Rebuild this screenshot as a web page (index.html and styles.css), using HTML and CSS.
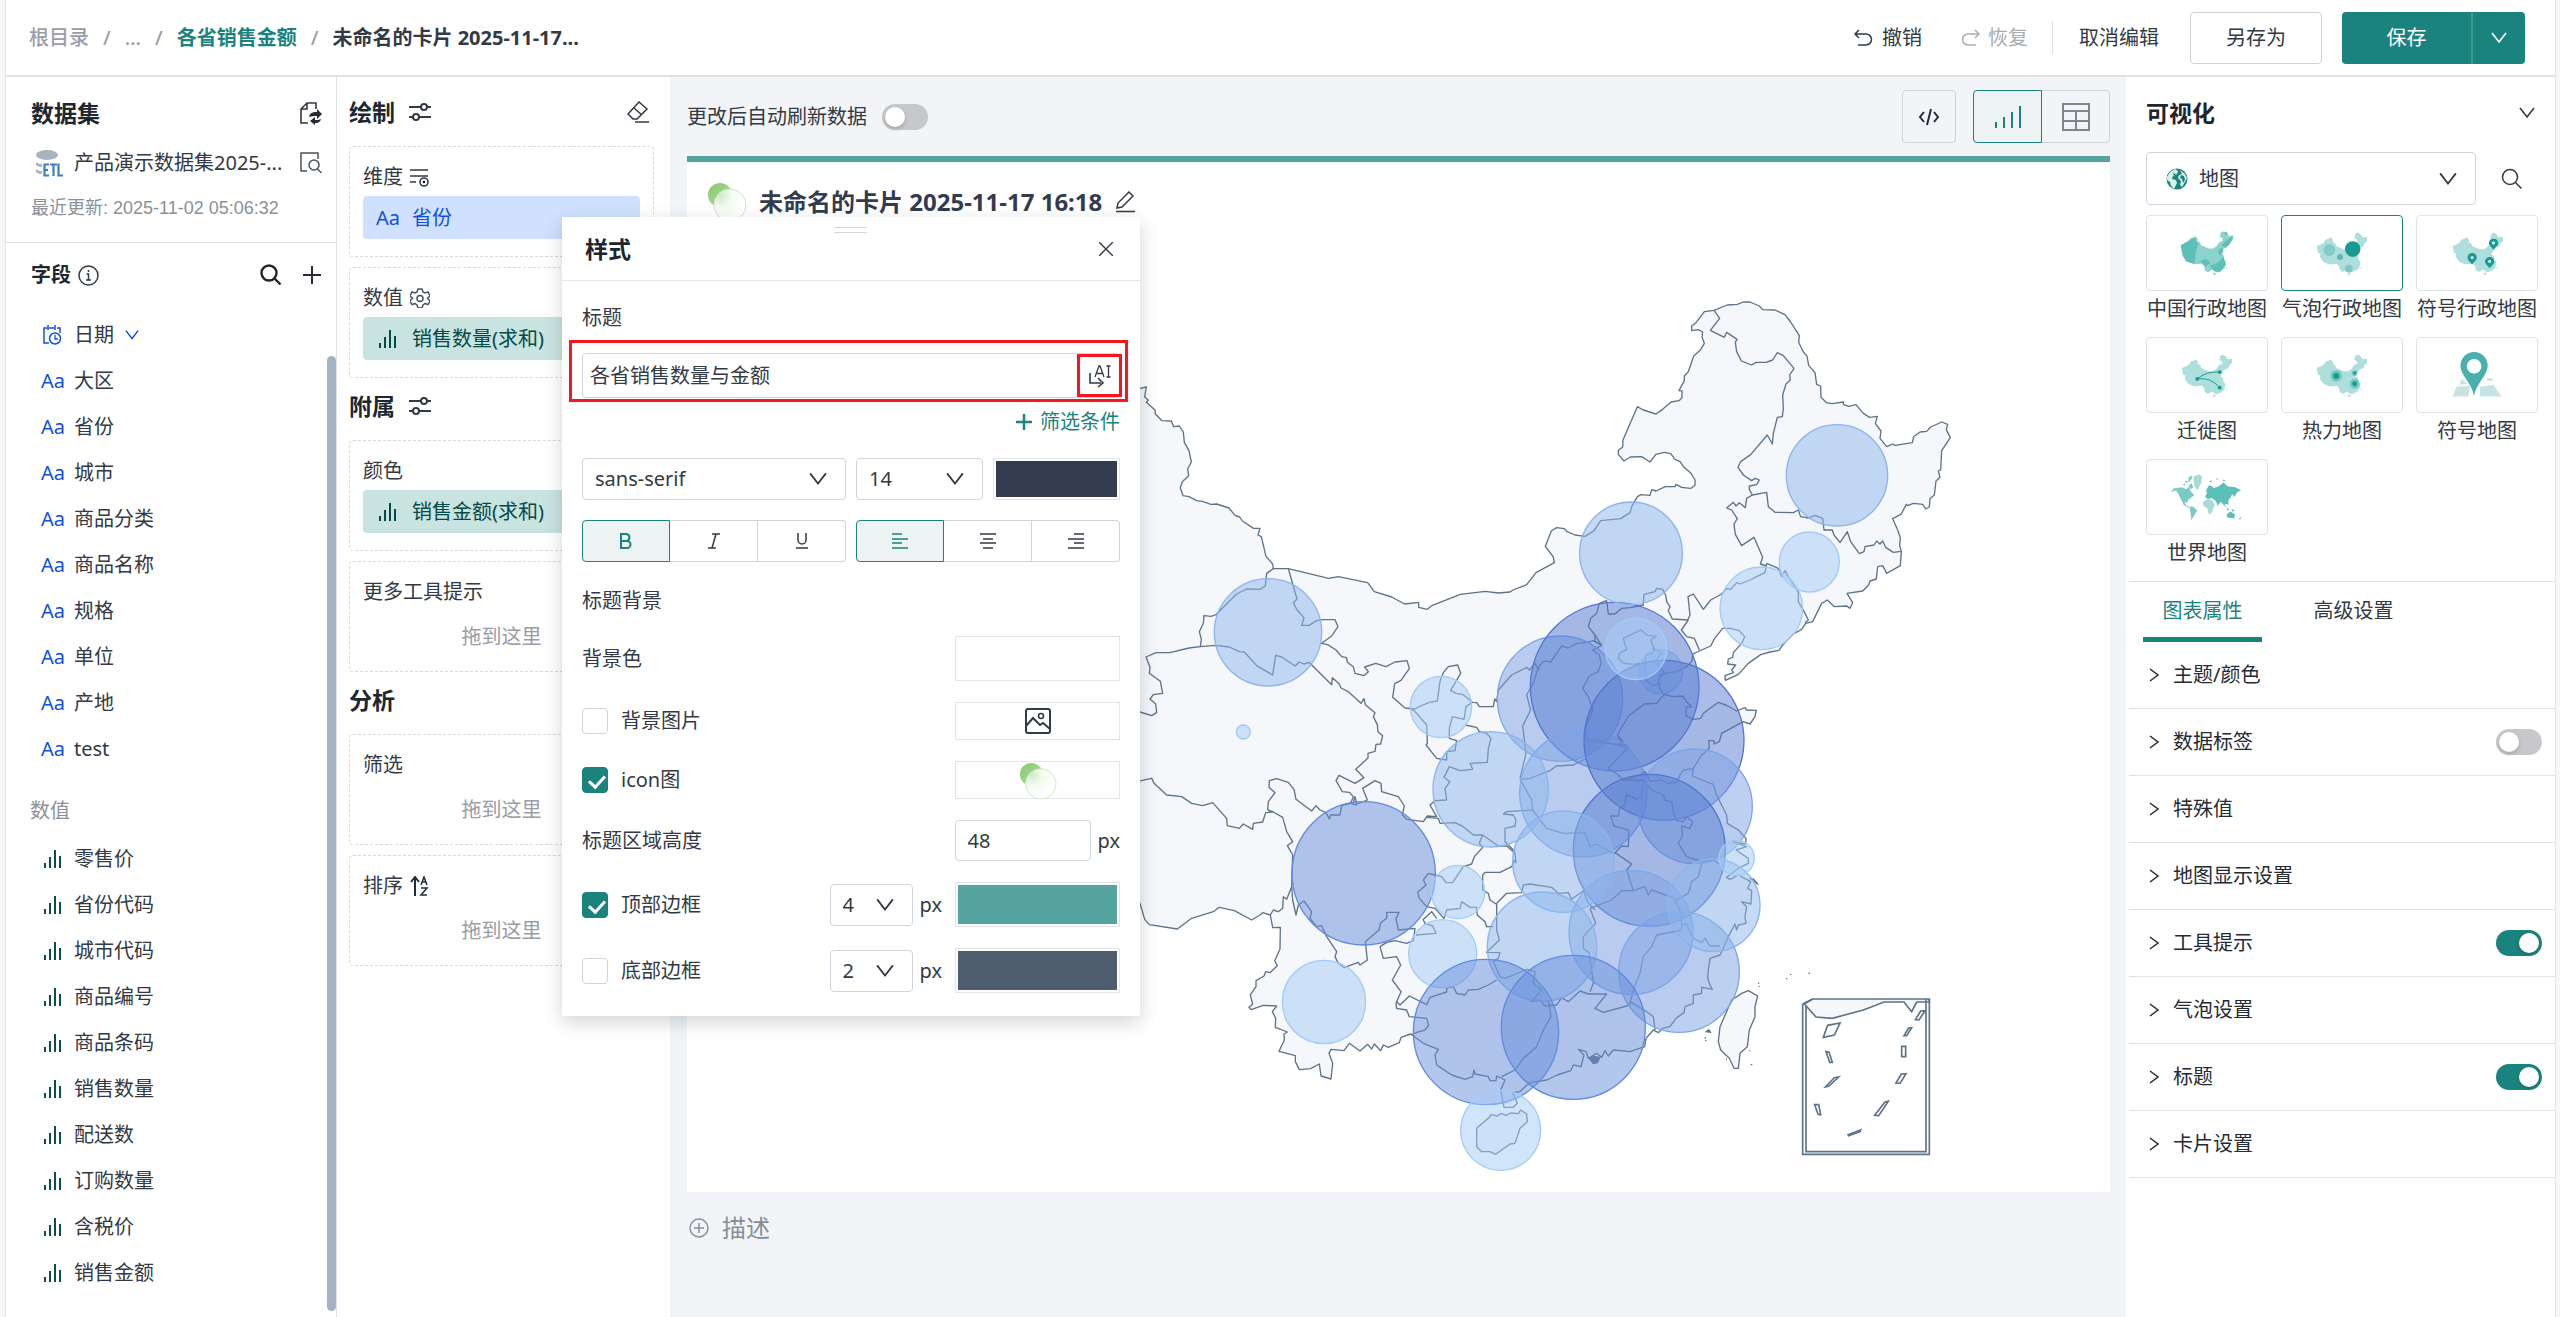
FILE: index.html
```html
<!DOCTYPE html>
<html lang="zh-CN">
<head>
<meta charset="utf-8">
<meta name="viewport" content="width=device-width, initial-scale=1">
<title>未命名的卡片</title>
<link rel="stylesheet" href="styles.css">
</head>
<body>
<svg class="sprite" aria-hidden="true">
  <symbol id="down" viewBox="0 0 16 16"><path d="M1 3l7 9 7-9" fill="none" stroke="currentColor" stroke-width="1.6"/></symbol>
  <symbol id="right" viewBox="0 0 16 16"><path d="M4 2l8 6-8 6" fill="none" stroke="currentColor" stroke-width="1.5"/></symbol>
  <symbol id="bars" viewBox="0 0 20 20"><path d="M3 19v-5M8 19V8M13 19V1M18 19V7" fill="none" stroke="currentColor" stroke-width="2"/></symbol>
  <symbol id="sliders" viewBox="0 0 22 20"><path d="M0 5h12M18 5h4M0 15h4M10 15h12" fill="none" stroke="currentColor" stroke-width="2"/><circle cx="15" cy="5" r="3" fill="none" stroke="currentColor" stroke-width="2"/><circle cx="7" cy="15" r="3" fill="none" stroke="currentColor" stroke-width="2"/></symbol>
  <symbol id="search" viewBox="0 0 22 22"><circle cx="9" cy="9" r="7.5" fill="none" stroke="currentColor"/><path d="M14.5 14.5l6 6" stroke="currentColor"/></symbol>
  <symbol id="orb" viewBox="0 0 40 40"><circle cx="13" cy="13" r="12" fill="url(#leaf)"/><circle cx="23" cy="23" r="16" fill="url(#glass)" stroke="#cfe8c5" stroke-width="1"/></symbol>
  <symbol id="china" viewBox="0 0 162 135"><path d="M0 42l14-6 10-6 4-8 12-4 5-4 7 8 0 8 8 4 2 8 10 4 13 6 15 0 12-8 6-10 12-6-2-8-8-4 4-14 8-4 8 6 8 10 14-2v12l-8 8-4 10-14 6-8 12-4 10 8 2 2 14 6 8-4 18-10 8-14 6-8-3-6-6-14 8-10-6-2-12-8-8-22 2-20-8-12-16 2-10-8-4z"/><circle cx="104" cy="131" r="4"/><path d="M140 110l4-2-2 9z"/></symbol>
  <symbol id="pin" viewBox="0 0 20 24"><path d="M10 0a9.500 9.500 0 0 1 9.500 9.500C19.500 15 13 18 10 24 7 18 .5 15 .5 9.500A9.500 9.500 0 0 1 10 0z" fill="#189a93"/><circle cx="10" cy="9.500" r="3" fill="#fff"/></symbol>
  <defs>
    <linearGradient id="leaf" x1="0" y1="0" x2="1" y2="1"><stop offset="0" stop-color="#85c76d"/><stop offset="1" stop-color="#b9e0aa"/></linearGradient>
    <radialGradient id="glass" cx=".2" cy=".2" r=".8"><stop offset="0" stop-color="#cfeac5"/><stop offset=".45" stop-color="#f4fbf1"/><stop offset="1" stop-color="#fff"/></radialGradient>
  </defs>
</svg>

<div class="app">
  <header class="topbar">
    <nav class="crumbs" aria-label="路径">
      <a href="#">根目录</a><span>/</span><a href="#">...</a><span>/</span><a href="#" class="crumb-link">各省销售金额</a><span>/</span><strong>未命名的卡片 2025-11-17...</strong>
    </nav>
    <div class="actions">
      <button class="plain"><svg width="20" height="20" viewBox="0 0 20 20"><path d="M5 2L1 6l4 4M1 6h11a5.500 5.500 0 0 1 0 11H4" fill="none" stroke="currentColor" stroke-width="1.500"/></svg>撤销</button>
      <button class="plain muted" disabled><svg width="20" height="20" viewBox="0 0 20 20"><path d="M15 2l4 4-4 4M19 6H8a5.500 5.500 0 0 0 0 11h8" fill="none" stroke="currentColor" stroke-width="1.500"/></svg>恢复</button>
      <i class="divider"></i>
      <button class="plain cancel">取消编辑</button>
      <button class="outline">另存为</button>
      <div class="split"><button class="save">保存</button><button class="more" aria-label="更多"><svg width="16" height="16"><use href="#down"/></svg></button></div>
    </div>
  </header>

  <aside class="data-col">
    <section class="dataset">
      <div class="line head"><h2>数据集</h2><svg class="end" width="22" height="24" viewBox="0 0 22 24"><path d="M8 22H1V8l6-6h9v6M7 2v6H1" fill="none" stroke="#333a44" stroke-width="1.600"/><path d="M9 16c1-5 5-5 8-5V8l5 5-5 5v-3c-3 0-6 0-8 1zM21 18c-1 4-4 4-6 4v2l-5-4 5-4v3c2 0 4 0 6-1z" fill="#252b33"/></svg></div>
      <div class="line name">
        <svg width="28" height="27" viewBox="0 0 28 27"><ellipse cx="12" cy="5" rx="11" ry="5" fill="#a9b4bf"/><path d="M1 12c2 2 4 2 6 2v3c-3 0-5-1-6-2zM1 19c2 2 4 2 6 2v3c-3 0-5-1-6-2z" fill="#a9b4bf"/><path d="M14 14.500H9.500v11H14M9.500 20H13M15 14.500h7M18.500 14.500V26M23.500 13.500v12H28" fill="none" stroke="#3c7fc0" stroke-width="2.200"/></svg>
        <span>产品演示数据集2025-...</span>
        <svg class="end" width="22" height="22" viewBox="0 0 22 22"><path d="M7 19H1V1h17v6" fill="none" stroke="#4a525c" stroke-width="1.500"/><circle cx="14" cy="13" r="5" fill="none" stroke="#4a525c" stroke-width="1.500"/><path d="M17.500 17l4 4" stroke="#4a525c" stroke-width="1.500"/></svg>
      </div>
      <p class="updated">最近更新: 2025-11-02 05:06:32</p>
    </section>
    <section class="fields">
      <div class="line fields-head"><h3>字段</h3>
        <svg width="21" height="21" viewBox="0 0 21 21"><circle cx="10.500" cy="10.500" r="9.500" fill="none" stroke="#333a44" stroke-width="1.500"/><path d="M8.500 9h2v6M8 15h5M10.500 5v2" fill="none" stroke="#333a44" stroke-width="1.500"/></svg>
        <button class="icon bold end" aria-label="搜索"><svg width="22" height="22"><use href="#search"/></svg></button>
        <button class="icon" aria-label="添加"><svg width="20" height="20" viewBox="0 0 20 20"><path d="M10 1v18M1 10h18" stroke="#252b33" stroke-width="2"/></svg></button>
      </div>
      <ul class="field-list">
        <li><svg class="fi" width="20" height="20" viewBox="0 0 20 20"><path d="M7 18H2V3h3M7 3h5M15 3h3v5M6 0v5M13 0v5" fill="none" stroke="#0f50e0" stroke-width="1.500"/><circle cx="13" cy="13.500" r="5.500" fill="none" stroke="#0f50e0" stroke-width="1.500"/><path d="M13 10v4h3" fill="none" stroke="#0f50e0" stroke-width="1.300"/></svg>日期<svg class="blue" width="14" height="14"><use href="#down"/></svg></li>
        <li><b>Aa</b>大区</li><li><b>Aa</b>省份</li><li><b>Aa</b>城市</li><li><b>Aa</b>商品分类</li><li><b>Aa</b>商品名称</li><li><b>Aa</b>规格</li><li><b>Aa</b>单位</li><li><b>Aa</b>产地</li><li><b>Aa</b>test</li>
      </ul>
      <h4>数值</h4>
      <ul class="field-list">
        <li><svg class="fi"><use href="#bars"/></svg>零售价</li><li><svg class="fi"><use href="#bars"/></svg>省份代码</li><li><svg class="fi"><use href="#bars"/></svg>城市代码</li><li><svg class="fi"><use href="#bars"/></svg>商品编号</li><li><svg class="fi"><use href="#bars"/></svg>商品条码</li><li><svg class="fi"><use href="#bars"/></svg>销售数量</li><li><svg class="fi"><use href="#bars"/></svg>配送数</li><li><svg class="fi"><use href="#bars"/></svg>订购数量</li><li><svg class="fi"><use href="#bars"/></svg>含税价</li><li><svg class="fi"><use href="#bars"/></svg>销售金额</li>
      </ul>
      <div class="thumb"></div>
    </section>
  </aside>

  <section class="draw-col">
    <div class="group-head first"><h2>绘制</h2><svg width="22" height="20"><use href="#sliders"/></svg>
      <svg class="end" width="22" height="22" viewBox="0 0 22 22"><path d="M6 18l-5-5L12 1l8 7-10 10zM7 7l8 7M8 21h14" fill="none" stroke="#333a44" stroke-width="1.500"/></svg></div>
    <div class="zone"><p>维度<svg width="20" height="20" viewBox="0 0 20 20"><path d="M0 3h18M0 9h18M0 15h6" stroke="#333a44" stroke-width="1.600"/><circle cx="14" cy="15" r="4" fill="none" stroke="#333a44" stroke-width="1.600"/><circle cx="14" cy="15" r="1.200"/></svg></p><div class="chip dim"><b>Aa</b>省份</div></div>
    <div class="zone"><p>数值<svg width="20" height="20" viewBox="0 0 20 20"><path d="M8 1h4l1 3 2 1 3-1 2 4-2.500 2L20 13l-2 3.500-3-1-2 1.500-1 3H8l-1-3-2-1.500-3 1L0 13l2.500-3L0 8l2-4 3 1 2-1z" fill="none" stroke="#4a525c" stroke-width="1.500"/><circle cx="10" cy="10.500" r="3" fill="none" stroke="#4a525c" stroke-width="1.500"/></svg></p><div class="chip num"><svg><use href="#bars"/></svg>销售数量(求和)</div></div>
    <div class="group-head"><h2>附属</h2><svg width="22" height="20"><use href="#sliders"/></svg></div>
    <div class="zone"><p>颜色</p><div class="chip num"><svg><use href="#bars"/></svg>销售金额(求和)</div></div>
    <div class="zone"><p>更多工具提示</p><span class="drop">拖到这里</span></div>
    <div class="group-head"><h2>分析</h2></div>
    <div class="zone"><p>筛选</p><span class="drop">拖到这里</span></div>
    <div class="zone"><p>排序<svg width="20" height="20" viewBox="0 0 20 20"><path d="M5 20V2M1 6l4-5 4 5" fill="none" stroke="#252b33" stroke-width="2"/><path d="M11 9l3-8 3 8M12 6h4M11 12h6l-6 7h6" fill="none" stroke="#252b33" stroke-width="1.500"/></svg></p><span class="drop">拖到这里</span></div>
  </section>

  <main class="canvas">
    <div class="toolbar">
      <label for="auto">更改后自动刷新数据</label><input id="auto" class="switch" type="checkbox" role="switch">
      <button class="tool code end" aria-label="代码"><svg width="22" height="18" viewBox="0 0 22 18"><path d="M6 4L2 9l4 5M16 4l4 5-4 5M13 1L9 17" fill="none" stroke="#252b33" stroke-width="2"/></svg></button>
      <div class="toggle"><button class="tool on" aria-label="图表"><svg width="28" height="22" viewBox="0 0 28 22"><path d="M2 22v-6M10 22V11M18 22V6M26 22V0" stroke="currentColor" stroke-width="2"/></svg></button><button class="tool" aria-label="表格"><svg width="28" height="28" viewBox="0 0 28 28"><path d="M1 1h26v26H1zM1 8h26M1 18h26M14 8v19" fill="none" stroke="#80868e" stroke-width="2"/></svg></button></div>
    </div>
    <article class="card">
      <div class="card-head"><svg class="orb" width="40" height="40"><use href="#orb"/></svg><h1>未命名的卡片 2025-11-17 16:18</h1>
        <svg width="22" height="22" viewBox="0 0 22 22"><path d="M3 17l1-5L15 1l4 4L8 16zM2 20.500h19" fill="none" stroke="#333a44" stroke-width="1.500"/></svg></div>
      <svg class="map" viewBox="0 0 1423 950" role="img" aria-label="各省销售数量与金额地图">
        <g transform="translate(453 38) scale(.333333)">
          <g class="land">
            <path d="M-30 325L0 325 19 321 14 350 25 361 19 367 45 390 46 402 66 422 94 423 101 440 118 438 130 456 133 487 147 512 154 546 143 567 146 587 127 605 121 623 129 647 147 650 170 662 187 664 213 673 230 672 267 684 285 706 299 711 307 723 341 745 360 745 354 765 364 770 378 829 398 852 400 866 445 866 566 895 595 890 683 908 703 935 755 951 794 972 836 967 836 982 862 988 877 976 961 943 1036 934 1075 939 1110 936 1119 930 1160 914 1188 878 1243 848 1240 831 1216 799 1234 753 1250 743 1273 746 1280 754 1305 765 1335 769 1362 752 1382 722 1442 716 1470 698 1475 680 1492 650 1503 644 1530 646 1535 629 1548 633 1576 620 1605 620 1608 613 1625 622 1653 625 1665 616 1665 600 1653 580 1632 562 1620 545 1605 538 1592 521 1573 517 1548 523 1530 546 1505 530 1471 531 1452 543 1435 523 1435 511 1448 501 1449 480 1492 380 1510 390 1548 402 1568 388 1593 366 1617 362 1626 353 1626 333 1617 332 1633 302 1633 288 1645 275 1661 228 1682 209 1693 190 1686 172 1688 156 1675 149 1655 152 1655 138 1668 128 1693 95 1722 91 1762 75 1792 73 1810 66 1830 66 1858 78 1868 89 1905 90 1935 104 1952 126 1978 167 1976 187 1990 216 2001 228 2006 256 2025 278 2030 313 2042 318 2043 352 2060 368 2076 371 2110 366 2110 373 2126 379 2148 374 2170 400 2189 412 2212 409 2206 430 2223 453 2220 475 2240 500 2258 492 2265 496 2317 488 2321 470 2340 456 2360 454 2372 441 2405 426 2423 433 2419 449 2431 473 2405 512 2402 570 2395 573 2400 592 2388 603 2383 645 2370 656 2368 681 2357 687 2348 673 2320 670 2303 677 2299 673 2283 703 2258 716 2273 750 2281 773 2279 797 2284 814 2281 857 2240 880 2228 857 2213 860 2209 897 2190 903 2186 915 2168 933 2121 940 2138 968 2130 985 2120 978 2083 980 2062 960 2045 970 2018 1025 1997 1030 1985 1048 1960 1062 1928 1095 1917 1111 1890 1116 1862 1124 1825 1150 1795 1183 1756 1201 1755 1187 1780 1178 1775 1170 1787 1155 1763 1152 1765 1137 1778 1132 1780 1118 1805 1090 1814 1070 1797 1052 1772 1045 1748 1045 1724 1075 1712 1098 1658 1122 1656 1143 1640 1160 1610 1175 1585 1178 1560 1185 1554 1215 1572 1243 1600 1250 1628 1248 1640 1265 1655 1280 1638 1282 1638 1308 1662 1318 1682 1315 1690 1300 1735 1267 1758 1275 1790 1293 1815 1283 1820 1290 1849 1291 1845 1310 1830 1332 1810 1325 1745 1360 1738 1385 1722 1392 1722 1382 1706 1382 1708 1405 1685 1425 1660 1465 1657 1488 1685 1500 1720 1513 1732 1550 1760 1605 1762 1630 1795 1650 1818 1675 1817 1692 1778 1685 1820 1700 1788 1710 1825 1735 1825 1750 1795 1765 1760 1792 1770 1798 1795 1785 1832 1805 1823 1825 1835 1832 1833 1872 1805 1865 1820 1880 1815 1910 1818 1930 1795 1935 1790 1950 1785 1932 1765 1970 1750 2005 1740 2025 1710 2035 1705 2070 1703 2095 1710 2115 1717 2128 1685 2122 1685 2140 1660 2145 1660 2170 1635 2180 1632 2198 1608 2215 1590 2240 1568 2245 1555 2258 1540 2250 1518 2275 1514 2300 1470 2315 1420 2310 1405 2328 1395 2312 1385 2332 1370 2320 1345 2335 1338 2315 1315 2308 1332 2325 1323 2360 1300 2355 1292 2372 1252 2385 1220 2400 1170 2408 1155 2420 1140 2435 1118 2438 1132 2470 1120 2482 1092 2482 1082 2430 1095 2400 1070 2388 1068 2402 1050 2402 1045 2390 1005 2382 1002 2370 998 2390 975 2398 935 2385 905 2365 890 2355 885 2325 895 2308 850 2290 812 2262 783 2272 778 2288 745 2302 730 2295 722 2312 703 2292 695 2307 683 2293 660 2313 628 2290 612 2312 573 2308 567 2320 578 2350 573 2397 543 2388 538 2352 512 2366 478 2369 466 2345 466 2327 417 2314 433 2280 432 2262 442 2256 406 2242 407 2215 397 2195 410 2178 370 2176 333 2189 327 2182 338 2173 331 2145 348 2120 348 2102 372 2088 377 2075 390 2078 412 2057 404 2043 420 2007 421 1942 398 1943 391 1905 368 1898 360 1905 335 1920 283 1892 238 1882 220 1895 155 1915 112 1947 28 1934 14 1918 0 1870 -30 1850z"/>
            <path d="M1825 2132L1853 2148 1845 2180 1845 2210 1828 2250 1822 2300 1800 2320 1795 2365 1782 2365 1768 2335 1742 2310 1735 2285 1740 2240 1775 2160 1805 2140z"/>
            <path d="M1010 2545L1050 2510 1053 2504 1072 2508 1083 2500 1098 2506 1112 2499 1135 2501 1142 2490 1160 2502 1162 2525 1140 2545 1125 2590 1110 2592 1085 2610 1067 2623 1050 2615 1025 2615 1010 2600z"/>
          </g>
          <g class="edge">
            <path d="M400 866L380 880 376 918 360 928 320 927 290 942 250 982 228 1004 213 1009 192 1007 190 1030 178 1055 184 1078 181 1100"/>
            <path d="M-30 1290L0 1296 35 1307 50 1298 47 1272 30 1257 40 1244 68 1240 61 1204 28 1180 30 1162 18 1131 48 1118 90 1118 147 1104 181 1100 228 1096 268 1101 298 1115 313 1116 350 1157 398 1185 407 1126 425 1131 465 1158 478 1146 492 1152 507 1147 575 1214 577 1193 598 1212 603 1224 625 1235 663 1270 672 1256 676 1274 705 1298 700 1310 712 1334 714 1355 728 1367 722 1392 708 1393 705 1414 684 1420 684 1434 647 1468 672 1493 645 1510 597 1486 588 1502 607 1535 628 1537 640 1550 632 1570 650 1575"/>
            <path d="M445 866L459 915 471 957 460 968 471 990 492 1013 485 1036 507 1036 530 1022 548 1019 585 1019 594 1040 575 1068 545 1090 563 1094 588 1110 605 1130 620 1133 622 1147 640 1160 645 1180 672 1187 685 1175 674 1161 707 1150 738 1160 765 1146 801 1142 808 1166 783 1201 764 1211 758 1252 795 1284 825 1287 835 1281 868 1267 892 1263 900 1204 910 1178 925 1160 953 1155 962 1180 932 1231 948 1240 970 1244 997 1267 1010 1268 1018 1280 1060 1280 1064 1257 1070 1265 1075 1230 1115 1185 1160 1162 1168 1170 1185 1150 1195 1170 1200 1155 1212 1143 1232 1146 1265 1098 1285 1104 1310 1090 1340 1087 1362 1082 1385 1096 1365 1065 1345 1040 1352 1015 1370 1000 1378 970 1400 962 1405 1002 1425 1002 1445 985 1470 983 1510 975 1512 943 1545 935 1550 925 1568 928 1577 945 1580 965 1590 980 1585 992 1597 1017 1643 1020 1650 1005 1644 950 1660 942 1690 988 1712 960 1745 942 1760 925 1772 928 1790 908 1800 912 1830 900 1850 890 1875 878 1880 850"/>
            <path d="M815 1287L830 1300 860 1335 862 1390 858 1395 890 1435 920 1440 920 1415 945 1412 950 1382 928 1375 928 1345 937 1310 972 1318 978 1280 995 1268"/>
          </g>
          <g class="edge" transform="translate(1020 0)">
            <path d="M860 850L895 865 905 890 915 872 925 890 955 938 955 965 975 1000 985 1020 975 1028"/>
            <path d="M860 858L841 852 848 832 822 772 785 797 766 763 762 732 772 716 755 690 740 684 760 667 768 678 778 668 796 683 800 655 817 645 808 628 808 618 830 614 838 600 825 595 815 602 790 585 774 562 782 545 812 524 862 465 877 492 880 460 892 412 907 410 910 385 908 345 918 312 931 300 929 285 942 265 910 227 892 218 878 240 858 247 828 247 815 255 784 243 770 215 766 187 771 178 740 157 733 172 691 151 719 115 702 91"/>
            <path d="M817 645L860 637 865 680 885 697 940 698 955 690 962 710 985 714 1005 706 1028 715 1032 750 1057 750 1062 765 1080 788 1102 755 1112 785 1138 821 1152 815 1155 800 1182 795 1190 783 1200 792 1208 783 1217 802 1240 817 1262 814"/>
            <path d="M625 1020L604 1050 620 1070 643 1075 658 1110M430 1075L482 1050 502 1066 528 1069 512 1080 522 1105 518 1120 498 1125 495 1145 465 1153 430 1150 415 1135 418 1120 440 1108zM518 1105L545 1118 528 1140 540 1165 555 1180 540 1190 533 1210 548 1240M495 1145L497 1200 520 1217 545 1210M345 1065L345 1085 365 1096M365 1096L338 1110 358 1125 363 1150 355 1175 328 1188 308 1225 325 1250 338 1290 318 1340 320 1380 400 1392 440 1395M555 1240L530 1270 493 1272 445 1308 412 1365 430 1385"/>
            <path d="M175 1160L160 1210 140 1245 152 1290 128 1338 138 1420 120 1495"/>
          </g>
          <g class="edge" transform="translate(1020 1260)">
            <path d="M412 110L430 130 412 135 445 142 385 205 415 225 430 242 490 240 485 290 470 298 440 283 432 320 420 322 415 348 392 348 402 378 430 385 447 392 445 440 425 438 405 458 455 492 440 510 460 572"/>
            <path d="M120 238L150 235 210 212 228 198 280 195 320 175M120 238L155 300 158 330 80 335 70 342 100 345 108 360 105 378 75 385 75 425 105 455M158 330L200 385 250 400 315 398 330 440 350 432 395 458 410 460"/>
            <path d="M490 240L515 270 550 285 555 300 575 305 580 335 590 362 610 365 620 350 638 365 630 385 605 378 608 405 595 430 620 470 665 485 700 480 730 500M430 242L480 225 495 215 512 245 545 240 565 250 590 245 600 225 612 210 640 205"/>
            <path d="M665 490L655 530 635 545 625 580 585 602 605 640 605 690 530 705 515 740 490 770 480 820 460 870 450 910M330 625L395 600 425 572 460 572 495 560 505 585 515 570 585 595M50 610L80 580 125 578 130 555 150 552 215 562 235 580 265 578 275 598 310 572 325 610 345 630"/>
            <path d="M330 625L347 670 310 710 310 745 328 760 340 850 330 875M150 905L180 900 195 918 230 915 245 893 265 905 300 873 325 882 380 882 345 925 370 937 440 918 455 908 500 935 520 950 525 990M605 675L620 672 640 715 665 728 675 715 690 738 720 738M205 900L213 950 190 990 170 1040 130 1075 105 1110 65 1130"/>
            <path class="spot" d="M328 1075l12-6 20 3-8 16-12 3zM678 995l8-6 6 8zM810 535l10 2 14 16zM918 836h4M932 822v3M986 818l3 3M836 848v4M837 858v3M676 1012v4M677 1020v3M808 1052h3M812 1094h5M738 1077h3"/>
          </g>
          <g class="edge" transform="translate(0 1260)">
            <path d="M1070 610L1070 690 1078 720 1040 757 1080 758 1075 775 1060 785 1080 830 1095 835 1120 825 1160 808 1185 815 1180 850 1205 870 1175 905M770 905L780 915 808 888 860 914 870 892 920 876 920 865 940 860 950 880 975 885 985 870 1015 868 1045 855 1070 840"/>
            <path d="M720 740L730 775 770 770 782 795 757 840 783 875 768 910 770 925 800 930 808 950 860 955 866 975 855 990 830 997 815 1005"/>
            <path d="M455 560L458 600 468 645 475 615 492 603 515 635 510 655 530 680 545 677 560 710 590 755 585 770 595 790 612 803 655 787 660 795 682 780 676 725 717 690 722 668 740 655 740 637 777 637 768 655 775 690 825 685 820 722 800 730 765 722 740 727 720 740"/>
            <path d="M865 520L885 525 905 530 918 548 938 548 970 500 995 492 1003 470 1028 442 1018 430 1028 405 1000 405 970 380 945 368 900 370 895 355 860 352M865 520L850 540 858 555 833 577 838 595 860 620 885 625 912 655 920 630 960 625 965 605 990 622 1010 622 1012 645 1035 665 1040 680 1060 680M848 660L875 635 890 655M850 660L855 670 878 678 888 700 828 705M1028 525L1035 517 1080 517 1115 500 1125 480M1028 525L1028 570 1045 580 1050 600 1068 612M1028 405L1075 438 1100 438 1125 460 1128 490"/>
            <path d="M383 330L385 305 405 278 387 262 388 242 410 236 445 247 462 268 468 298 515 333 528 317 540 330 558 338 568 357 572 345 600 345 605 317 640 308 645 290 650 312 682 300 668 265 705 242 723 250 725 275 775 290 793 318 787 345 800 358 850 365 862 348 890 350 870 315 885 302 920 300 915 265 930 245 912 232 928 200 960 212 998 208 990 190 1042 187 1045 145 1053 115 1040 100 1018 95 1010 82 975 75"/>
            <path d="M-10 245L35 235 42 250 80 285 125 290 155 310 188 317 218 308 260 355 262 377 298 385 310 372 338 388 340 370 368 366 377 338 400 336 428 352 440 395 458 425 442 437 458 465 455 560 440 598 430 590 428 625 415 635 400 630 391 645M383 330L400 336"/>
          </g>
          <g class="inset" transform="translate(1020 1260)">
            <path d="M973 912L998 897H1348V906H1310L1295 935 1272 906H1212L1150 930 1057 955 1008 951z"/>
            <path class="open" d="M968 912V1363H1348V897M978 917V1355H1338V897M968 912L998 897M1030 1012L1043 976 1080 969 1063 1005zM1038 1055L1047 1057 1057 1087 1049 1087zM1036 1161L1063 1133 1076 1131 1046 1159zM1004 1214L1016 1214 1022 1244 1014 1243zM1104 1304L1142 1290 1140 1295 1106 1307zM1184 1246L1215 1206 1225 1204 1196 1247zM1248 1149L1264 1122 1278 1121 1260 1150zM1265 1039H1277V1070H1265zM1272 1007L1286 984 1295 983 1280 1007zM1306 959L1322 933 1335 932 1317 960z"/>
          </g>
          <g class="bubbles">
            <circle class="b1" cx="1562" cy="1175" r="66"/>
            <circle class="b3" cx="1260" cy="1256" r="188"/>
            <circle class="b5" cx="1424" cy="1220" r="253"/>
            <circle class="b3" cx="1330" cy="1540" r="191"/>
            <circle class="b5" cx="1572" cy="1381" r="240"/>
            <circle class="b3" cx="1665" cy="1579" r="172"/>
            <circle class="b5" cx="1528" cy="1711" r="228"/>
            <circle class="b3" cx="1473" cy="1957" r="186"/>
            <circle class="b3" cx="1617" cy="2076" r="181"/>
            <circle class="b2" cx="1052" cy="1528" r="173"/>
            <circle class="b2" cx="1270" cy="1745" r="152"/>
            <circle class="b2" cx="1206" cy="2000" r="164"/>
            <circle class="b4" cx="671" cy="1780" r="215"/>
            <circle class="b1" cx="954" cy="1836" r="80"/>
            <circle class="b1" cx="908" cy="2021" r="102"/>
            <circle class="b4" cx="1038" cy="2256" r="218"/>
            <circle class="b4" cx="1300" cy="2242" r="216"/>
            <circle class="b2" cx="1721" cy="1876" r="139"/>
            <circle class="b1" cx="1790" cy="1734" r="53"/>
            <circle class="b2" cx="384" cy="1057" r="161"/>
            <circle class="b2" cx="2091" cy="586" r="152"/>
            <circle class="b2" cx="1473" cy="820" r="154"/>
            <circle class="b1" cx="2008" cy="846" r="90"/>
            <circle class="b1" cx="1864" cy="985" r="124"/>
            <circle class="b1" cx="1488" cy="1107" r="92"/>
            <circle class="b1" cx="903" cy="1281" r="92"/>
            <circle class="b1" cx="310" cy="1356" r="21"/>
            <circle class="b1" cx="552" cy="2166" r="125"/>
            <circle class="b1" cx="1082" cy="2551" r="120"/>
          </g>
        </g>
      </svg>
    </article>
    <button class="describe"><svg width="20" height="20" viewBox="0 0 20 20"><circle cx="10" cy="10" r="9" fill="none" stroke="currentColor" stroke-width="1.400"/><path d="M10 5v10M5 10h10" stroke="currentColor" stroke-width="1.400"/></svg>描述</button>
  </main>

  <aside class="viz">
    <section class="viz-types">
      <div class="line head"><h2>可视化</h2><svg class="end" width="16" height="16"><use href="#down"/></svg></div>
      <div class="pick-row">
        <div class="pick"><svg class="globe" width="22" height="22" viewBox="0 0 22 22"><circle cx="11" cy="11" r="10.500" fill="#1b837e"/><path d="M9 1l3 2-1 3-4 2-1 3 4 1 1 3-3 6-3-3-1-4-3-2 0-3 3-5zM14 2l5 4 2 4-2 4-3 5-2-2 1-4-3-3 1-3 3-1z" fill="#d9efec"/><path d="M7 5l3 1-2 2zM15 7l3 1 1 4-2 3-1-4-2-1z" fill="#1b837e"/></svg>
          <select aria-label="图表类型"><option>地图</option></select><svg class="caret" width="18" height="18"><use href="#down"/></svg></div>
        <button class="icon" aria-label="搜索图表"><svg width="22" height="22"><use href="#search"/></svg></button>
      </div>
      <div class="tiles">
        <button class="tile"><span><svg viewBox="0 0 122 76"><use href="#china" x="34" y="16" width="54" height="45" fill="#8dd3cd"/><path d="M34 30l14-8 4 7-2 6-2 14-8-2-4-6zM54 46l6-2 4 4-4 4zM64 51l8-3 6-6 2 8-6 8-6-2zM76 30l5-5 7-5-2 6-6 7zM72 37l4-5 2 4-3 5zM78 18l3-2 2 4z" fill="#5cbfb9"/></svg></span>中国行政地图</button>
        <button class="tile on"><span><svg viewBox="0 0 122 76"><use href="#china" x="35" y="17" width="52" height="44" fill="#addfdc"/><circle cx="48" cy="35" r="6" fill="#82cbc6"/><circle cx="72" cy="34" r="8" fill="#189a93"/><circle cx="59" cy="42" r="3" fill="#5fb5af"/><circle cx="68" cy="54" r="4" fill="#82c9c5"/></svg></span>气泡行政地图</button>
        <button class="tile"><span><svg viewBox="0 0 122 76"><use href="#china" x="36" y="17" width="52" height="44" fill="#addfdc"/><use href="#pin" x="73" y="23" width="10" height="12"/><use href="#pin" x="51" y="38" width="10" height="12"/><use href="#pin" x="69" y="42" width="10" height="12"/></svg></span>符号行政地图</button>
        <button class="tile"><span><svg viewBox="0 0 122 76"><use href="#china" x="35" y="17" width="52" height="44" fill="#addfdc"/><path d="M51 42q9-8 23-7M51 42q14-2 23 9" fill="none" stroke="#189a93"/><circle cx="51" cy="42" r="2" fill="#189a93"/><circle cx="74" cy="35" r="2" fill="#189a93"/><circle cx="74" cy="51" r="2" fill="#189a93"/></svg></span>迁徙图</button>
        <button class="tile"><span><svg viewBox="0 0 122 76"><use href="#china" x="35" y="17" width="52" height="44" fill="#addfdc"/><g fill="#72c7c0"><circle cx="55" cy="39" r="6"/><circle cx="74" cy="36" r="3"/><circle cx="74" cy="47" r="5"/></g><g fill="#189a93"><circle cx="55" cy="39" r="3"/><circle cx="74" cy="36" r="1.500"/><circle cx="74" cy="47" r="2.500"/></g></svg></span>热力地图</button>
        <button class="tile"><span><svg viewBox="0 0 122 76"><path d="M40 50l14-1-2 11H36zM64 50l14-2 8 12H64zM45 42l6 5-8 1zM71 41h5l2 3h-6z" fill="#c6e4e1"/><path d="M58 14.500a14 14 0 0 1 14 14c0 10-12 18-14 31-2-13-14-21-14-31a14 14 0 0 1 14-14z" fill="#4ab0ab"/><circle cx="58" cy="29" r="7.500" fill="#fff"/></svg></span>符号地图</button>
        <button class="tile"><span><svg viewBox="0 0 122 76"><path d="M27 29l8-1 5 2 3-3 1 5 4 4-5 4-2 2 0 2-3-1 2 4 3 1-1 1-5-3-3-6-3-6-2-3-5 2z" fill="#7acbc5"/><path d="M36 26l2-2 1 2zM38 22l3-1 0 3zM42 18l4-2-1 4-3 3zM42 26l3-2 2 4-2 2zM43 48l4 0 4 4-2 3-3 5-1 2-1-8z" fill="#7acbc5"/><path d="M47 17l6-2 3 2-1 7-4 7-3-4zM57 43l5-3 5 2 2 4-3 8-3 2-2-7-4-2z" fill="#a6dbd6"/><path d="M59 38l2-4-1-3 3-5 3 1 2 2 5-2 5-4 4 4 8 1 6 3-4 2-3 5-2-3-2 4-2 2 0 5-4-1 2 4-3-3-3-3-3 4-2-5-4-3-4 1zM81 56l4-3 5 3-1 4-7-1zM81 49l3 2-2 1zM86 50l4 2-3 1zM94 60l2-2-1 4zM63 22l3-1 0 2zM70 19l2 0 0 2zM77 20l3 1-2 1z" fill="#5cbfb9"/></svg></span>世界地图</button>
      </div>
    </section>
    <div class="tabs" role="tablist"><button role="tab" aria-selected="true" class="tab on">图表属性</button><button role="tab" class="tab">高级设置</button></div>
    <div class="props">
      <div class="prop"><svg><use href="#right"/></svg>主题/颜色</div>
      <div class="prop"><svg><use href="#right"/></svg><label for="p1">数据标签</label><input id="p1" class="switch" type="checkbox" role="switch"></div>
      <div class="prop"><svg><use href="#right"/></svg>特殊值</div>
      <div class="prop"><svg><use href="#right"/></svg>地图显示设置</div>
      <div class="prop"><svg><use href="#right"/></svg><label for="p2">工具提示</label><input id="p2" class="switch" type="checkbox" role="switch" checked></div>
      <div class="prop"><svg><use href="#right"/></svg>气泡设置</div>
      <div class="prop"><svg><use href="#right"/></svg><label for="p3">标题</label><input id="p3" class="switch" type="checkbox" role="switch" checked></div>
      <div class="prop"><svg><use href="#right"/></svg>卡片设置</div>
    </div>
  </aside>

  <section class="dialog" role="dialog" aria-label="样式">
    <i class="grip"></i>
    <div class="dialog-head"><h2>样式</h2><button class="icon end" aria-label="关闭"><svg width="14" height="14" viewBox="0 0 14 14"><path d="M0 0l14 14M14 0L0 14" stroke="#333a44" stroke-width="1.400"/></svg></button></div>
    <div class="dialog-body">
      <label class="title-label" for="title">标题</label>
      <div class="title-field"><input id="title" type="text" value="各省销售数量与金额"><button aria-label="翻译"><svg width="24" height="24" viewBox="0 0 24 24"><path d="M2 9v10h11M10 14l5 5-5 4" fill="none" stroke="#333a44" stroke-width="1.600"/><path d="M7 13l4-11h1l4 11M9 9.500h5M20.500 2v11M18.500 2h4M18.500 13h4" fill="none" stroke="#333a44" stroke-width="1.300"/></svg></button></div>
      <button class="add-filter"><svg width="16" height="16" viewBox="0 0 16 16"><path d="M8 0v16M0 8h16" stroke="currentColor" stroke-width="2.500"/></svg>筛选条件</button>
      <div class="font-row">
        <div class="sel"><select aria-label="字体"><option>sans-serif</option></select><svg class="caret" width="18" height="18"><use href="#down"/></svg></div>
        <div class="pair"><div class="sel"><select aria-label="字号"><option>14</option></select><svg class="caret" width="18" height="18"><use href="#down"/></svg></div><button class="swatch ink" aria-label="文字颜色"></button></div>
      </div>
      <div class="font-row buttons">
        <div class="seg"><button class="on" aria-label="加粗"><svg viewBox="0 0 16 16"><path d="M3 1h5a3.300 3.300 0 0 1 0 7H3h6a3.300 3.300 0 0 1 0 7H3z" fill="none" stroke="currentColor" stroke-width="2"/></svg></button><button aria-label="斜体"><svg viewBox="0 0 16 16"><path d="M6 1h8M2 15h8M10 1L6 15" stroke="currentColor" stroke-width="1.500"/></svg></button><button aria-label="下划线"><svg viewBox="0 0 16 16"><path d="M4 0v7a4 4 0 0 0 8 0V0M2 15h12" fill="none" stroke="currentColor" stroke-width="1.500"/></svg></button></div>
        <div class="seg"><button class="on" aria-label="左对齐"><svg viewBox="0 0 16 16"><path d="M0 1h10M0 6h16M0 10h10M0 15h16" stroke="currentColor" stroke-width="1.500"/></svg></button><button aria-label="居中"><svg viewBox="0 0 16 16"><path d="M0 1h16M3 6h10M0 10h16M3 15h10" stroke="currentColor" stroke-width="1.500"/></svg></button><button aria-label="右对齐"><svg viewBox="0 0 16 16"><path d="M6 1h10M0 6h16M6 10h10M0 15h16" stroke="currentColor" stroke-width="1.500"/></svg></button></div>
      </div>
      <p class="sub">标题背景</p>
      <div class="rows">
        <div class="row tall"><span>背景色</span><button class="swatch none end" aria-label="背景色"></button></div>
        <div class="row low"><input id="c1" type="checkbox" class="check"><label for="c1">背景图片</label><button class="pic end" aria-label="选择背景图片"><svg width="26" height="26" viewBox="0 0 26 26"><rect x="1" y="1" width="24" height="24" rx="2" fill="none" stroke="#333a44" stroke-width="2"/><circle cx="16" cy="8" r="2.500" fill="none" stroke="#333a44" stroke-width="1.600"/><path d="M1 18l7-8 7 7 3-2 7 6" fill="none" stroke="#333a44" stroke-width="2"/></svg></button></div>
        <div class="row low"><input id="c2" type="checkbox" class="check" checked><label for="c2">icon图</label><button class="pic end" aria-label="选择图标"><svg width="38" height="38"><use href="#orb"/></svg></button></div>
        <div class="row mid"><label for="h">标题区域高度</label><input id="h" class="num-in end" type="text" value="48"><span class="px">px</span></div>
        <div class="row tall"><input id="c3" type="checkbox" class="check" checked><label for="c3">顶部边框</label><div class="sel small end"><select aria-label="顶部边框宽度"><option>4</option></select><svg class="caret" width="18" height="18"><use href="#down"/></svg></div><span class="px">px</span><button class="swatch teal" aria-label="顶部边框颜色"></button></div>
        <div class="row tall"><input id="c4" type="checkbox" class="check"><label for="c4">底部边框</label><div class="sel small end"><select aria-label="底部边框宽度"><option>2</option></select><svg class="caret" width="18" height="18"><use href="#down"/></svg></div><span class="px">px</span><button class="swatch slate" aria-label="底部边框颜色"></button></div>
      </div>
    </div>
  </section>
</div>
</body>
</html>
```
FILE: styles.css
```css
* { box-sizing: border-box; }
body { margin: 0; background: #f6f7f8; color: #333a44; font: 20px/28px "Noto Sans", "Noto Sans CJK SC", sans-serif; }
h1, h2, h3, h4, p, ul { margin: 0; padding: 0; }
ul { list-style: none; }
svg { flex: none; display: block; }
button, input, select { font: inherit; color: inherit; margin: 0; padding: 0; border: 0; background: none; }
button { cursor: pointer; }
h2 { font-size: 23px; line-height: 32px; font-weight: 700; color: #20262e; }
h3 { font-size: 20px; font-weight: 700; color: #20262e; }
.sprite { position: absolute; width: 0; height: 0; }
.end { margin-left: auto; }
.icon { display: flex; align-items: center; stroke-width: 1.5; }
.icon.bold { stroke-width: 2.4; color: #20262e; }

.app { position: relative; margin: 0 5px 0 6px; min-height: 100vh; background: #fff; display: grid; grid-template-columns: 331px 333px minmax(0, 1fr) 429px; grid-template-rows: 77px 1fr; box-shadow: 0 0 1px 1px #e3e5e8; }

/* top bar */
.topbar { grid-column: 1 / -1; display: flex; align-items: center; justify-content: space-between; padding: 0 30px 0 23px; border-bottom: 2px solid #dfe2e6; }
.crumbs { display: flex; align-items: center; gap: 14px; color: #9a9ea4; font-weight: 500; white-space: nowrap; }
.crumbs a { color: inherit; text-decoration: none; }
.crumbs .crumb-link { color: #1b837e; font-weight: 700; }
.crumbs strong { color: #333a44; }
.actions { display: flex; align-items: center; }
.plain { display: flex; align-items: center; gap: 8px; margin-right: 38px; white-space: nowrap; }
.plain.muted { color: #a9adb3; margin-right: 24px; }
.plain.cancel { margin-right: 31px; }
.divider { width: 1px; height: 33px; background: #dcdfe3; margin-right: 26px; }
.outline { width: 132px; height: 52px; border: 1px solid #cdd1d6; border-radius: 4px; margin-right: 20px; }
.split { display: flex; height: 52px; background: #1b837e; border-radius: 4px; color: #fff; }
.save { width: 131px; border-right: 2px solid #3f9a95; }
.more { width: 52px; display: grid; place-items: center; }

/* data set column */
.data-col { border-right: 1px solid #dfe2e6; display: flex; flex-direction: column; }
.dataset { height: 166px; border-bottom: 1px solid #dfe2e6; }
.line { display: flex; align-items: center; }
.head { padding: 20px 14px 18px 25px; }
.dataset .name { padding: 2px 14px 0 29px; gap: 11px; white-space: nowrap; }
.updated { padding: 17px 0 0 25px; font: 18px/28px "Liberation Sans", "Noto Sans CJK SC", sans-serif; color: #8b9097; }
.fields { position: relative; flex: 1; }
.fields-head { padding: 18px 14px 23px 25px; gap: 7px; }
.fields-head .icon + .icon { margin-left: 13px; }
.field-list li { height: 46px; display: flex; align-items: center; gap: 11px; padding-left: 35px; }
.field-list b, .chip b { width: 22px; font-weight: 400; color: #0f50e0; }
.field-list .fi { width: 20px; height: 20px; margin: 0 1px; color: #0b4f4a; }
.field-list .blue { color: #0f50e0; }
.fields h4 { padding: 25px 0 11px 24px; font-weight: 400; color: #8b9097; }
.thumb { position: absolute; right: 0; top: 113px; bottom: 6px; width: 9px; border-radius: 5px; background: #a3b2c4; }

/* drawing column */
.draw-col { padding: 0 16px 0 12px; }
.group-head { height: 62px; display: flex; align-items: center; gap: 14px; padding-bottom: 6px; }
.group-head.first { height: 69px; padding: 3px 5px 0 0; }
.group-head.first { padding-top: 0; }
.zone { height: 111px; border: 1px dashed #d6d9dd; border-radius: 4px; padding: 16px 13px; display: flex; flex-direction: column; }
.zone + .zone { margin-top: 10px; }
.zone p { display: flex; align-items: center; gap: 7px; }
.chip { height: 43px; margin-top: 5px; border-radius: 4px; display: flex; align-items: center; gap: 14px; padding-left: 13px; }
.chip.dim { background: #d0e0ff; color: #0f50e0; }
.chip.num { background: #c9e3e0; color: #054a45; }
.chip svg { width: 20px; height: 20px; margin: 0 1px; }
.drop { margin-top: 17px; text-align: center; color: #989ca5; }

/* canvas */
.canvas { background: #f2f4f8; padding: 0 16px 0 17px; }
.toolbar { height: 79px; display: flex; align-items: center; }
.switch { appearance: none; width: 46px; height: 26px; border-radius: 13px; background: #c6c8cb; position: relative; margin-left: 15px; cursor: pointer; }
.switch::before { content: ""; position: absolute; left: 3px; top: 3px; width: 20px; height: 20px; border-radius: 50%; background: #fff; box-shadow: 0 2px 4px rgba(0, 35, 11, .2); }
.switch:checked { background: #1b837e; }
.switch:checked::before { left: 23px; }
.tool { width: 69px; height: 53px; display: grid; place-items: center; border: 1px solid #cfd3d8; border-radius: 0 4px 4px 0; }
.tool.code { width: 54px; border-radius: 4px; margin-right: 17px; }
.tool.on { border-color: #1b837e; border-radius: 4px 0 0 4px; background: #edf3f3; color: #1b837e; }
.toggle { display: flex; }
.toggle .tool:last-child { border-left: 0; width: 68px; }
.card { background: #fff; border-top: 6px solid #56a49f; }
.card-head { height: 80px; display: flex; align-items: center; padding-left: 20px; gap: 12px; color: #343b4e; }
.card-head h1 { font-size: 24px; line-height: 32px; font-weight: 700; white-space: nowrap; }
.map { width: 100%; }
.land { fill: #f5f7fb; stroke: #5f7386; stroke-width: 4; stroke-linejoin: round; }
.edge { fill: none; stroke: #5f7386; stroke-width: 4; stroke-linejoin: round; }
.edge .spot { fill: #5f7386; }
.inset { fill: #f5f7fb; stroke: #5f7386; stroke-width: 5; }
.inset .open { fill: none; }
.bubbles circle { fill-opacity: .5; stroke-width: 4; }
.b1 { fill: #a3cbf5; stroke: #a0ccf8; }
.b2 { fill: #8db5eb; stroke: #8ab4ef; }
.b3 { fill: #7da1e3; stroke: #7ba7e8; }
.b4 { fill: #678dd9; stroke: #5f8bdf; }
.b5 { fill: #5579cf; stroke: #4f77cf; }
.describe { display: flex; align-items: center; gap: 13px; margin: 20px 0 0 2px; font-size: 24px; line-height: 32px; color: #878d95; }

/* visualisation column */
.viz { padding-left: 3px; }
.viz-types { height: 505px; padding: 0 17px; border-bottom: 1px solid #dfe2e6; }
.viz-types .head { padding: 20px 3px 23px 0; }
.pick-row { display: flex; align-items: center; gap: 25px; }
.pick, .sel { position: relative; display: flex; align-items: center; }
.pick select, .sel select { appearance: none; width: 100%; height: 100%; border: 1px solid #cfd5dd; border-radius: 4px; background: #fff; }
.pick { width: 330px; height: 53px; }
.pick select { padding-left: 52px; }
.globe { position: absolute; left: 20px; }
.caret { position: absolute; right: 19px; pointer-events: none; }
.tiles { display: grid; grid-template-columns: repeat(3, 122px); gap: 12px 13px; padding-top: 10px; }
.tile { height: 110px; display: flex; flex-direction: column; align-items: center; gap: 4px; white-space: nowrap; }
.tile span { width: 122px; height: 76px; border: 1px solid #dfe2e6; border-radius: 4px; }
.tile svg { width: 120px; height: 74px; }
.tile.on span { border-color: #1b837e; }
.tabs { display: flex; gap: 32px; padding: 0 14px; height: 60px; }
.tab { width: 119px; padding: 8px 0 5px; border-bottom: 5px solid transparent; }
.tab.on { color: #1b837e; border-color: #1b837e; }
.prop { height: 67px; border-bottom: 1px solid #dfe2e6; display: flex; align-items: center; gap: 11px; padding: 0 13px 0 17px; color: #252b33; }
.prop svg { width: 16px; height: 16px; }
.prop .switch { margin-left: auto; }

/* floating style dialog */
.dialog { position: absolute; left: 556px; top: 217px; width: 578px; background: #fff; box-shadow: 0 6px 18px rgba(30, 40, 50, .2); }
.grip { position: absolute; left: 272px; top: 10px; width: 33px; height: 6px; border: solid #cdd7e0; border-width: 1px 0; }
.dialog-head { height: 64px; display: flex; align-items: center; padding: 0 27px 0 23px; border-bottom: 1px solid #e1e6ec; }
.dialog-body { padding: 23px 20px 23px; display: flex; flex-direction: column; }
.title-label { margin-bottom: 21px; }
.title-field { position: relative; height: 45px; display: flex; }
.title-field input { flex: 1; min-width: 0; border: 1px solid #cfd5dd; border-radius: 4px; padding: 0 7px; }
.title-field button { position: absolute; right: -2px; top: 1px; width: 45px; height: 43px; display: grid; place-items: center; border: 3px solid #f5161f; background: #fff; }
.title-field::after { content: ""; position: absolute; inset: -13px -8px -4px -13px; border: 3px solid #f5161f; pointer-events: none; }
.add-filter { align-self: flex-end; display: flex; align-items: center; gap: 8px; margin: 10px 0 22px; color: #1b837e; }
.font-row { display: grid; grid-template-columns: 1fr 1fr; gap: 10px; height: 42px; }
.font-row.buttons { margin: 20px 0 25px; }
.pair { display: grid; grid-template-columns: 1fr 1fr; gap: 10px; }
.sel select { padding-left: 12px; }
.sel.small { width: 83px; height: 42px; }
.swatch { border: 1px solid #dfe5ea; background-clip: content-box; padding: 2px; }
.row .swatch { width: 165px; height: 45px; }
.ink { background-color: #343b4e; }
.teal { background-color: #56a49f; }
.slate { background-color: #505d6f; }
.none { background-color: #fff; }
.seg { display: grid; grid-template-columns: repeat(3, 1fr); }
.seg button { display: grid; place-items: center; border: 1px solid #cfd5dd; border-left: 0; }
.seg button:first-child { border-radius: 4px 0 0 4px; }
.seg button:last-child { border-radius: 0 4px 4px 0; }
.seg .on { border: 1px solid #1b837e; background: #edf3f3; color: #1b837e; }
.seg svg { width: 16px; height: 16px; }
.sub { margin-bottom: 21px; }
.rows { display: flex; flex-direction: column; gap: 21px; }
.row { display: flex; align-items: center; }
.tall { height: 45px; }
.low { height: 38px; }
.mid { height: 41px; }
.check { appearance: none; position: relative; width: 26px; height: 26px; border: 1px solid #cfd5dd; border-radius: 4px; margin-right: 13px; }
.check:checked { background: #1b837e; border-color: #1b837e; }
.check:checked::after { content: ""; position: absolute; left: 9px; top: 4px; width: 7px; height: 13px; border: solid #fff; border-width: 0 3px 3px 0; transform: rotate(42deg); }
.pic { width: 165px; height: 100%; display: grid; place-items: center; border: 1px solid #dfe5ea; }
.num-in { width: 136px; height: 41px; border: 1px solid #cfd5dd; border-radius: 4px; padding-left: 12px; }
.px { margin-left: 7px; }
.px + .swatch { margin-left: 13px; }
```
